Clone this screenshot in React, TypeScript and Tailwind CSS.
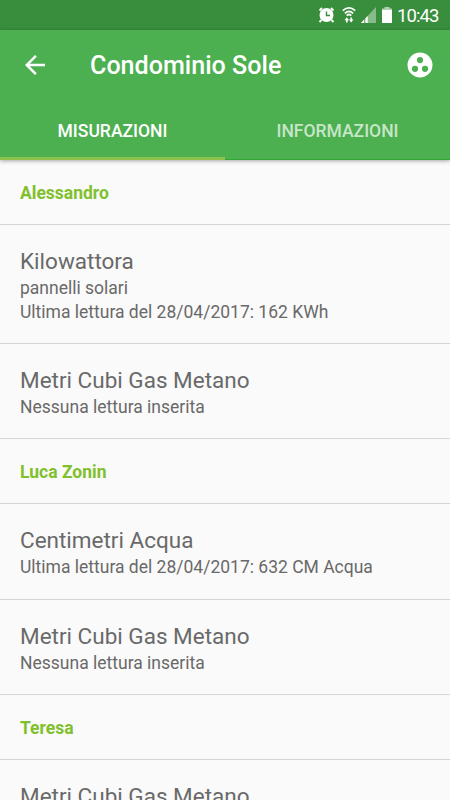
import React from 'react';

type Reading = { title: string; note?: string; last: string };
type Group = { owner: string; readings: Reading[] };

const groups: Group[] = [
  {
    owner: 'Alessandro',
    readings: [
      { title: 'Kilowattora', note: 'pannelli solari', last: 'Ultima lettura del 28/04/2017: 162 KWh' },
      { title: 'Metri Cubi Gas Metano', last: 'Nessuna lettura inserita' },
    ],
  },
  {
    owner: 'Luca Zonin',
    readings: [
      { title: 'Centimetri Acqua', last: 'Ultima lettura del 28/04/2017: 632 CM Acqua' },
      { title: 'Metri Cubi Gas Metano', last: 'Nessuna lettura inserita' },
    ],
  },
  {
    owner: 'Teresa',
    readings: [{ title: 'Metri Cubi Gas Metano', last: 'Nessuna lettura inserita' }],
  },
];

function StatusBar() {
  return (
    <div className="flex h-[30px] shrink-0 items-center bg-[#388e3c] pl-[318px] text-white">
      {/* alarm */}
      <svg className="h-[18px] w-[17px] shrink-0" viewBox="0 0 17 18">
        <path d="M1.5 4.5L4 2M15.5 4.5L13 2M3.5 14L1.5 16M13.5 14L15.5 16" stroke="currentColor" strokeWidth="1.8" />
        <circle cx="8.5" cy="9" r="7" fill="currentColor" />
        <path d="M8.5 5.5V9.5H12" fill="none" stroke="#388e3c" strokeWidth="1.4" />
      </svg>
      {/* wifi with up/down arrows */}
      <svg className="ml-[6px] h-[18px] w-4 shrink-0" viewBox="0 0 16 18" fill="none" stroke="currentColor" strokeWidth="1.7">
        <path d="M1.8 4.7Q8-.8 14.2 4.7M3.8 7.3Q8 3.3 12.2 7.3M5.7 9.6Q8 7.4 10.3 9.6" />
        <path d="M5.8 13v3.5M10.2 11.5v3" />
        <path d="M3.5 14.2h4.6l-2.3-3zM7.9 13.5h4.6l-2.3 3z" fill="currentColor" stroke="none" />
      </svg>
      {/* signal */}
      <svg className="ml-1 h-4 w-[15px] shrink-0" viewBox="0 0 15 16" fill="currentColor">
        <path d="M0 16L15 0V16z" opacity=".4" />
        <path d="M0 16L3 12.8V16zM4.5 16v-4.8l2.2-2.3V16z" />
      </svg>
      {/* battery */}
      <svg className="ml-[6px] h-4 w-[10px] shrink-0" viewBox="0 0 10 16" fill="currentColor">
        <path d="M2.5 0h5v1.5H10V3H0V1.5h2.5z" opacity=".6" />
        <path d="M0 3h10v13H0z" />
      </svg>
      <span className="ml-[5px] mt-[2px] text-[18.5px] leading-[22px] tracking-[-0.9px]">10:43</span>
    </div>
  );
}

export default function App() {
  return (
    <div className="flex h-[800px] w-[450px] flex-col overflow-hidden bg-[#fafafa] font-['Roboto',sans-serif]">
      <StatusBar />
      <header className="z-10 h-[130px] shrink-0 bg-[#4caf50] text-white shadow-[0_1px_4px_rgba(0,0,0,0.35)]">
        <div className="flex h-[70px] items-center px-5">
          <svg className="h-[30px] w-[30px]" viewBox="0 0 24 24" fill="currentColor">
            <path d="M20 11H7.83l5.59-5.59L12 4l-8 8 8 8 1.41-1.41L7.83 13H20v-2z" />
          </svg>
          <h1 className="ml-[40px] pt-[2px] text-[25.1px] font-medium">Condominio Sole</h1>
          <svg className="-mr-[5px] ml-auto h-[30px] w-[30px]" viewBox="0 0 24 24" fill="currentColor">
            <path fillRule="evenodd" d="M12 2a10 10 0 1 0 0 20 10 10 0 0 0 0-20zM8 17.5a2.5 2.5 0 1 1 0-5 2.5 2.5 0 0 1 0 5zM9.5 8a2.5 2.5 0 1 1 5 0 2.5 2.5 0 0 1-5 0zm6.5 9.5a2.5 2.5 0 1 1 0-5 2.5 2.5 0 0 1 0 5z" />
          </svg>
        </div>
        <div className="grid h-[60px] grid-cols-2 text-center text-[17.5px] font-medium leading-[62px]">
          <div className="h-[60px] border-b-[3px] border-[#8bc34a]">MISURAZIONI</div>
          <div className="h-[60px] border-b border-[#32a637] text-white/70">INFORMAZIONI</div>
        </div>
      </header>
      <main>
        {groups.map((group) => (
          <section key={group.owner}>
            <h2 className="h-[65px] border-b border-[#d5d5d5] pl-5 text-[17.5px] font-bold leading-[66px] text-[#80c02c]">
              {group.owner}
            </h2>
            {group.readings.map((reading) => (
              <article key={reading.title} className="border-b border-[#d5d5d5] px-5 pb-[19.2px] pt-[22px] text-[17.5px] leading-6 text-[#696969]">
                <h3 className="text-[22.5px] leading-[29px]">{reading.title}</h3>
                {reading.note && <p>{reading.note}</p>}
                <p>{reading.last}</p>
              </article>
            ))}
          </section>
        ))}
      </main>
    </div>
  );
}
